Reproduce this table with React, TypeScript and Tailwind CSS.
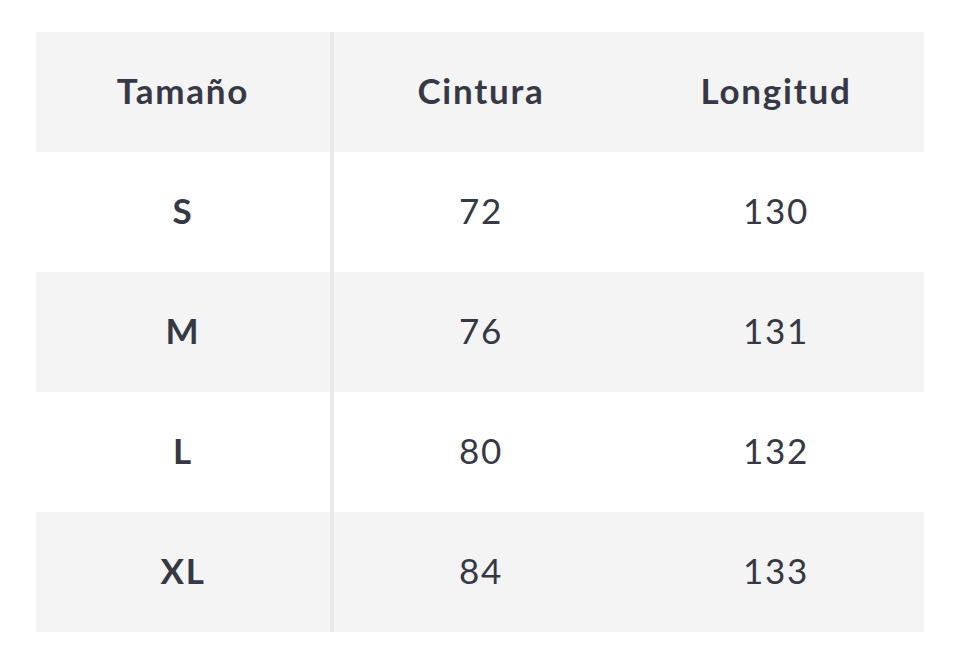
import React from "react";

const rows = [
  ["S", "72", "130"],
  ["M", "76", "131"],
  ["L", "80", "132"],
  ["XL", "84", "133"],
];

export default function App() {
  return (
    <div className="w-[960px] h-[647px] bg-white pt-[32px] pl-[36px]" style={{ fontFamily: "Lato, 'Noto Sans', sans-serif" }}>
      <div className="w-[888px] flex flex-col text-[#363945] text-[35px] tracking-[0.05em]">
        <div className="flex h-[120px] bg-[#f4f4f4]">
          <div className="w-[298px] border-r-[4px] border-[#e9e9e9] flex items-center justify-center pb-[3px] font-bold">Tamaño</div>
          <div className="w-[294px] flex items-center justify-center pb-[3px] font-bold">Cintura</div>
          <div className="flex-1 flex items-center justify-center pb-[3px] font-bold">Longitud</div>
        </div>
        {rows.map((r, i) => (
          <div key={r[0]} className={`flex h-[120px] ${i % 2 === 0 ? "bg-white" : "bg-[#f4f4f4]"}`}>
            <div className="w-[298px] border-r-[4px] border-[#e9e9e9] flex items-center justify-center pb-[3px] font-bold">{r[0]}</div>
            <div className="w-[294px] flex items-center justify-center pb-[3px]">{r[1]}</div>
            <div className="flex-1 flex items-center justify-center pb-[3px]">{r[2]}</div>
          </div>
        ))}
      </div>
    </div>
  );
}
